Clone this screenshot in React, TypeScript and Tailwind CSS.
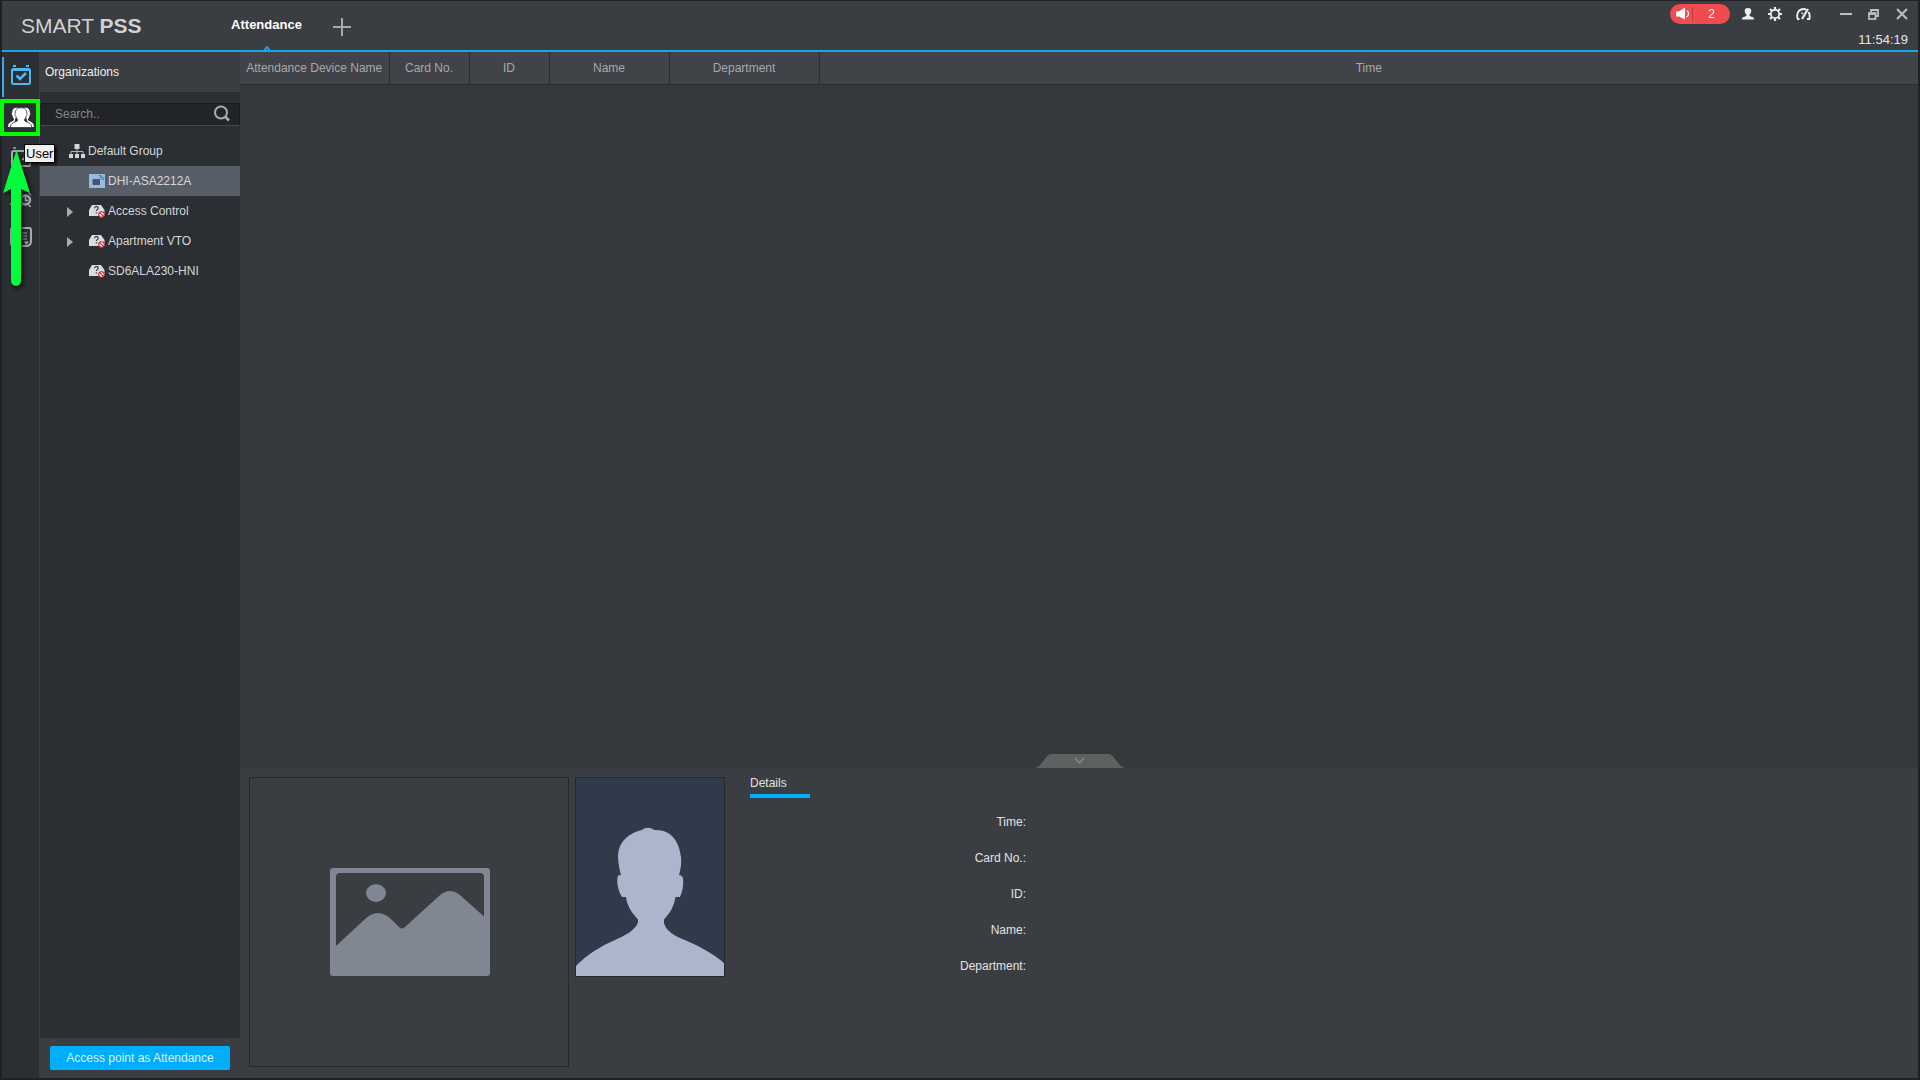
import React from "react";

type IconProps = { className?: string };

const CalendarCheckIcon = () => (
  <svg width="20" height="20" viewBox="0 0 20 20" fill="none" aria-hidden="true">
    <path d="M2 1h3M15 1h3" stroke="#4db9f0" strokeWidth="2" />
    <rect x="1" y="4" width="18" height="15" rx="1.5" stroke="#4db9f0" strokeWidth="2" />
    <path d="M1 5h18" stroke="#4db9f0" strokeWidth="2" />
    <path d="M5.500 10.500l3.500 3.500 6-6" stroke="#4db9f0" strokeWidth="2.600" />
  </svg>
);

const UsersIcon = () => (
  <svg width="26" height="22" viewBox="0 -1 26 22" aria-hidden="true">
    <path
      d="M10.500 1C6.500 0 4 2 4.200 5.500c-.8.4-.5 2.500.3 3C4.800 10.500 6 11.500 6 12.500c0 2-5 2.500-5.600 5L0 20h5M15.500 1c4-1 6.500 1 6.300 4.500.8.400.5 2.500-.3 3-.3 2-1.500 3-1.500 4 0 2 5 2.500 5.600 5L26 20h-5z"
      fill="#ffffff"
    />
    <path
      d="M13 .8c-4 0-6 2-5.600 5.200-.9.300-.5 2.800.5 3.200.3 1.800 1.300 3 1.900 3.600 0 2.500-6.800 2.200-7.300 6.200v1.500h21V19c-.5-4-7.300-3.700-7.300-6.200.6-.6 1.600-1.800 1.900-3.600 1-.4 1.400-2.900.5-3.200C19 2.800 17 .8 13 .8z"
      fill="#ffffff"
      stroke="#33353a"
      strokeWidth="0.8"
    />
  </svg>
);

const ShiftIcon = () => (
  <svg width="20" height="20" viewBox="0 0 20 20" fill="none" stroke="#a5a8b0" strokeWidth="2" aria-hidden="true">
    <path d="M2 1h3M15 1h3" strokeWidth="1.6" />
    <rect x="1" y="4" width="18" height="15" rx="1.5" />
    <path d="M11 13l4-3v5" />
  </svg>
);

const AlarmUserIcon = () => (
  <svg width="22" height="20" viewBox="0 -5 22 20" fill="none" aria-hidden="true">
    <path d="M0 13c0-3 4-3 4-5C2 6 2 1 6 1s4 5 2 7v5z" fill="#a5a8b0" />
    <circle cx="15.500" cy="8" r="4.500" stroke="#a5a8b0" strokeWidth="2.400" />
    <path d="M15.500 5v3.500H18M10.500 3l2-2M18.500 1l2.500 2M12 13l-1.500 2M19 13l1.500 2" stroke="#a5a8b0" strokeWidth="1.600" />
  </svg>
);

const ReportIcon = () => (
  <svg width="22" height="20" viewBox="0 0 22 20" fill="none" stroke="#a5a8b0" strokeWidth="2" aria-hidden="true">
    <path d="M1 1h18q2 0 2 2v11c0 3-2 5-5 5H4c-2 0-3-1-3-3V3q0-2 2-2z" />
    <path d="M12 6h5M12 9h5M12 12h5" strokeWidth="1.200" />
    <path d="M14 14.500h5l-3 3.500z" fill="#a5a8b0" stroke="none" />
  </svg>
);

const PointerArrow = () => (
  <svg
    width="28"
    height="136"
    viewBox="0 0 28 136"
    aria-hidden="true"
    className="pointer-events-none absolute top-[149px] left-px z-20 overflow-visible drop-shadow-[2px_2px_2px_rgba(0,0,0,0.8)]"
  >
    <path d="M13.500 0L27 43l-9-4v92a5 5 0 0 1-10 0V39l-8 4z" fill="#00fe3c" />
  </svg>
);

const SearchIcon = () => (
  <svg width="18" height="18" viewBox="0 0 18 18" fill="none" stroke="#a9abaf" aria-hidden="true">
    <circle cx="8" cy="7.500" r="6" strokeWidth="2" />
    <path d="M12 11.500l4 4" strokeWidth="2.600" />
  </svg>
);

const GroupIcon = () => (
  <svg width="16" height="14" viewBox="0 0 16 14" className="ml-px" aria-hidden="true">
    <path d="M5.500 0h5v5h-5zM0 10h4v4H0zM6 10h4v4H6zM12 10h4v4h-4z" fill="#d4d5d8" />
    <path d="M8 4v6M2 11V7.500h12V11" stroke="#b4b6ba" fill="none" />
  </svg>
);

const TerminalIcon = () => (
  <svg width="16" height="14" viewBox="0 0 16 14" aria-hidden="true">
    <rect width="16" height="14" fill="#93bde0" />
    <rect x="3.500" y="5" width="7.500" height="6" rx="1" fill="#46566e" />
    <path d="M10 1.500c3 0 4.500 2 4.500 4.500M10.500 3.500c1.300 0 2 1 2 2" stroke="#46566e" strokeWidth="0.900" fill="none" />
  </svg>
);

const OfflineDeviceIcon = () => (
  <svg width="16" height="14" viewBox="0 0 16 14" aria-hidden="true">
    <path d="M3 1h9l3.500 5v6H0V6z" fill="#dcdcde" />
    <path d="M5.500 4.200c.2-2.200 4-2.200 3.600.1C8.900 5.600 7.300 5.600 7.300 7M7.300 8.200v1.300" stroke="#26282c" strokeWidth="1.100" fill="none" />
    <circle cx="12.500" cy="10.500" r="2.800" fill="#ffffff" stroke="#c8202a" strokeWidth="1.100" />
    <path d="M10.700 8.700l3.600 3.600" stroke="#c8202a" strokeWidth="1.100" />
  </svg>
);

const SpeakerIcon = () => (
  <svg width="14" height="14" viewBox="0 0 14 14" aria-hidden="true">
    <path d="M0 4.500h3l6-4v12L3 9.500H0z" fill="#ffffff" />
    <path d="M10.500 3.500c2.700 1.200 2.700 5.300 0 6.500" stroke="#ffffff" strokeWidth="1.200" fill="none" />
  </svg>
);

const PersonIcon = () => (
  <svg width="12" height="12" viewBox="0 0 12 12" fill="#eeeeef" aria-hidden="true">
    <path d="M6 0C3.800 0 2.600 1.300 2.700 3c0 1.800 1.100 2.800 1.800 3.700.3 1-.5 1.500-2 2C1 9.200 0 9.500 0 11.500h12c0-2-1-2.300-2.500-2.800-1.500-.5-2.300-1-2-2C8.200 5.800 9.300 4.800 9.300 3 9.400 1.300 8.200 0 6 0z" />
  </svg>
);

const GearIcon = () => (
  <svg width="14" height="14" viewBox="0 0 14 14" fill="none" stroke="#eeeeef" aria-hidden="true">
    <circle cx="7" cy="7" r="4.200" strokeWidth="1.800" />
    <path
      d="M7 0v2.500M7 11.500V14M0 7h2.500M11.500 7H14M2 2l2 2M10 10l2 2M12 2l-2 2M4 10l-2 2"
      strokeWidth="2.200"
    />
  </svg>
);

const GaugeIcon = () => (
  <svg width="15" height="12" viewBox="0 0 15 12" fill="none" stroke="#eeeeef" aria-hidden="true">
    <path d="M3.500 11H1.800C0 6 2.500 1 7.500 1c1 0 2 .2 2.800.7M12.500 4c1.300 2 1.500 4.500.8 7H11" strokeWidth="1.900" />
    <path d="M12 1L6 11" strokeWidth="2.200" />
    <path d="M5.500 4.500L7 6" strokeWidth="1.200" />
  </svg>
);

const RestoreIcon = () => (
  <svg width="11" height="11" viewBox="0 0 11 11" fill="none" stroke="#bdbec0" strokeWidth="1.800" aria-hidden="true">
    <path d="M3 3V1h7v6H8" />
    <rect x="1" y="4" width="6.500" height="6" />
    <path d="M1 5h6.500" />
  </svg>
);

const CloseIcon = () => (
  <svg width="12" height="12" viewBox="0 0 12 12" stroke="#bdbec0" strokeWidth="2" aria-hidden="true">
    <path d="M1 1l10 10M11 1L1 11" />
  </svg>
);

const PicturePlaceholder = ({ className }: IconProps) => (
  <svg viewBox="0 0 160 108" className={className} role="img" aria-label="No snapshot">
    <path
      fillRule="evenodd"
      fill="#808692"
      d="M3 0h154a3 3 0 0 1 3 3v102a3 3 0 0 1-3 3H3a3 3 0 0 1-3-3V3a3 3 0 0 1 3-3zM6 9v69L34 52q14-14 28 0l7 7q3 3 6 0L109 28q11-10 22 0L154 48.500V9q0-4-4-4H10Q6 5 6 9z"
    />
    <ellipse cx="46" cy="25" rx="10" ry="9" fill="#808692" />
  </svg>
);

const AvatarPlaceholder = ({ className }: IconProps) => (
  <svg viewBox="0 0 148 198" className={className} role="img" aria-label="No portrait">
    <rect width="148" height="198" fill="#303a4b" />
    <path
      fill="#abb5cb"
      d="M0 198V188C10 177 27 167 38 162.500C49 157.500 60 152 62 144V141.500C56 135 51 128 50 119H46C42 113 40 102 42 98Q43 96.500 45 97.500C43 90 42 83 42 77C43 63 53 55 66 52C69 49 75 49 78 52C94 51 103 62 105 79C105.500 85 105 90 103 97.500Q106 96.500 107 100C108 107 106 115 104 119H99.500C98 128 95 134 88 141.500V145C90 153 98 158 110 162.500C123 168 138 176 148 185V198z"
    />
  </svg>
);

const railItems = [
  { label: "Attendance", icon: <CalendarCheckIcon />, active: true },
  { label: "User", icon: <UsersIcon />, active: false },
  { label: "Shift", icon: <ShiftIcon />, active: false },
  { label: "Alarm", icon: <AlarmUserIcon />, active: false },
  { label: "Report", icon: <ReportIcon />, active: false },
];

const devices = [
  { name: "DHI-ASA2212A", expandable: false, selected: true },
  { name: "Access Control", expandable: true, selected: false },
  { name: "Apartment VTO", expandable: true, selected: false },
  { name: "SD6ALA230-HNI", expandable: false, selected: false },
];

const columns = [
  { name: "Attendance Device Name", width: "w-[149px]" },
  { name: "Card No.", width: "w-20" },
  { name: "ID", width: "w-20" },
  { name: "Name", width: "w-[120px]" },
  { name: "Department", width: "w-[150px]" },
  { name: "Time", width: "" },
];

const details = ["Time:", "Card No.:", "ID:", "Name:", "Department:"];

function TitleBar() {
  return (
    <header className="relative flex h-[51px] shrink-0 justify-between border-b-2 border-[#1ba5e6] bg-[#3a3d41]">
      <div className="flex">
        <div className="w-[180px] pt-3 pl-[19px] text-[21px] leading-[26px] text-[#d0d1d3]">
          SMART <b>PSS</b>
        </div>
        <nav className="flex pt-3">
          <div className="flex w-[169px] justify-center">
            <button className="h-6 text-[13px] leading-6 font-bold text-white">Attendance</button>
          </div>
          <button aria-label="New tab" className="-ml-[18px] flex h-7 w-[18px] items-center justify-center">
            <svg width="18" height="18" viewBox="0 0 18 18" stroke="#a8a9ac" strokeWidth="2" aria-hidden="true">
              <path d="M9 0v18M0 9h18" />
            </svg>
          </button>
        </nav>
      </div>
      <svg
        width="8"
        height="5"
        viewBox="0 0 8 5"
        className="absolute -bottom-px left-[261px]"
        fill="none"
        stroke="#1ba5e6"
        strokeWidth="2"
        aria-hidden="true"
      >
        <path d="M1 5l3-4 3 4" />
      </svg>
      <div className="flex flex-col items-end pt-[3px] pr-2.5">
        <div className="flex h-5 items-center">
          <button
            aria-label="2 alarms"
            className="mr-3 flex h-5 w-[60px] items-center rounded-full bg-[#f04b4e] pl-[6px] text-[12px] text-white"
          >
            <SpeakerIcon />
            <span className="ml-0.5 flex-1 border-l border-[#b93c40] text-center leading-[14px]">2</span>
          </button>
          <div className="mr-[29px] flex items-center gap-[14px]">
            <button aria-label="Account"><PersonIcon /></button>
            <button aria-label="Settings"><GearIcon /></button>
            <button aria-label="Status"><GaugeIcon /></button>
          </div>
          <div className="flex items-center gap-4">
            <button aria-label="Minimize" className="flex h-3 w-3 items-center">
              <span className="h-0.5 w-full bg-[#bdbec0]" />
            </button>
            <button aria-label="Restore"><RestoreIcon /></button>
            <button aria-label="Close" className="ml-px"><CloseIcon /></button>
          </div>
        </div>
        <time className="mt-2 text-[13px] leading-4 text-[#e6e7e9]">11:54:19</time>
      </div>
    </header>
  );
}

function Rail() {
  return (
    <nav className="w-[38px] shrink-0 border-r border-[#3a3d42] bg-[#2b2e33] pt-[5px]">
      {railItems.map((item) => (
        <button
          key={item.label}
          aria-label={item.label}
          className={`flex h-10 w-full items-center justify-center border-l-2 pr-0.5 ${
            item.active ? "border-[#3da9e8] pb-1" : "border-transparent"
          }`}
        >
          {item.icon}
        </button>
      ))}
    </nav>
  );
}

function Sidebar() {
  return (
    <aside className="flex w-[200px] shrink-0 flex-col bg-[#2b2e33] text-[12px] text-[#d6d7d9]">
      <h2 className="h-10 bg-[#3a3d41] pl-[5px] leading-10 text-[#eeeff0]">Organizations</h2>
      <div className="mt-[11px] flex h-[23px] items-center border border-[#1b1c1f] border-b-[#44474c] bg-[#222428] pr-2 pb-px">
        <input
          type="text"
          aria-label="Search"
          placeholder="Search.."
          className="w-full min-w-0 bg-transparent pl-3.5 outline-none placeholder:text-[#85878b]"
        />
        <button aria-label="Search devices"><SearchIcon /></button>
      </div>
      <ul className="flex-1 pt-2.5">
        <li>
          <div className="flex h-[30px] items-center gap-[3px] pl-7">
            <GroupIcon />
            <span>Default Group</span>
          </div>
          <ul>
            {devices.map((device) => (
              <li
                key={device.name}
                className={`flex h-[30px] items-center ${device.selected ? "bg-[#585e68]" : ""}`}
              >
                <span className="flex w-[49px] pt-0.5 pl-[27px]">
                  {device.expandable && (
                    <button aria-label={`Expand ${device.name}`}>
                      <svg width="6" height="10" viewBox="0 0 6 10" fill="#a9abb0" aria-hidden="true">
                        <path d="M0 0l6 5-6 5z" />
                      </svg>
                    </button>
                  )}
                </span>
                {device.selected ? <TerminalIcon /> : <OfflineDeviceIcon />}
                <span className="pl-[3px]">{device.name}</span>
              </li>
            ))}
          </ul>
        </li>
      </ul>
      <div className="bg-[#3a3d41] px-2.5 pt-2 pb-2">
        <button className="h-6 w-full rounded-xs bg-[#00aeff] text-[12px] text-[#d5f1ff]">
          Access point as Attendance
        </button>
      </div>
    </aside>
  );
}

function Records() {
  return (
    <section className="flex flex-1 flex-col justify-between">
      <table className="w-full table-fixed border-collapse text-[12px] text-[#a6a8ad]">
        <thead>
          <tr className="h-8 border-b border-[#2c2e32] bg-[#404347]">
            {columns.map((column) => (
              <th
                key={column.name}
                scope="col"
                className={`border-r border-[#2c2e32] p-0 text-center font-normal whitespace-nowrap last:border-r-0 ${column.width}`}
              >
                {column.name}
              </th>
            ))}
          </tr>
        </thead>
        <tbody />
      </table>
      <button aria-label="Collapse details" className="self-center pl-0.5">
        <svg width="90" height="14" viewBox="0 0 90 14" aria-hidden="true">
          <path d="M0 14C8 12 10 0 17 0h56c7 0 9 12 17 14z" fill="#5d6160" />
          <path d="M40 4l4.500 5L49 4" stroke="#858887" strokeWidth="1.500" fill="none" />
        </svg>
      </button>
    </section>
  );
}

function DetailsPanel() {
  return (
    <section className="flex shrink-0 items-start bg-[#3a3d41] px-[9px] pt-[9px] pb-[11px] text-[12px] text-[#e2e3e5]">
      <div className="flex h-[290px] w-80 items-center justify-center border border-[#26282c] pl-0.5">
        <PicturePlaceholder className="w-40" />
      </div>
      <div className="ml-1.5 w-[150px] border border-[#26282c]">
        <AvatarPlaceholder className="block w-full" />
      </div>
      <div className="ml-[25px] flex-1">
        <button className="block w-[60px] border-b-4 border-[#00aeff] pb-1 text-left leading-[13px]">Details</button>
        <dl className="mt-1.5 w-[276px] text-right">
          {details.map((label) => (
            <div key={label} className="h-9 leading-9">
              <dt>{label}</dt>
              <dd />
            </div>
          ))}
        </dl>
      </div>
    </section>
  );
}

export default function App() {
  return (
    <div className="relative flex min-h-screen flex-col border border-r-2 border-b-2 border-l-2 border-[#1f2124] bg-[#35383c] font-['Liberation_Sans',Arial,sans-serif]">
      <TitleBar />
      <div className="flex flex-1">
        <Rail />
        <Sidebar />
        <main className="flex min-w-0 flex-1 flex-col">
          <Records />
          <DetailsPanel />
        </main>
      </div>
      <div className="pointer-events-none absolute top-[98px] -left-0.5 h-[37px] w-10 border-4 border-[#00fe00]" />
      <div
        role="tooltip"
        className="absolute top-[143px] left-[22px] z-30 border border-black bg-[#f0f0f0] px-px text-[13px] leading-[17px] text-black shadow-[2px_2px_2px_rgba(0,0,0,0.6)]"
      >
        User
      </div>
      <PointerArrow />
    </div>
  );
}
